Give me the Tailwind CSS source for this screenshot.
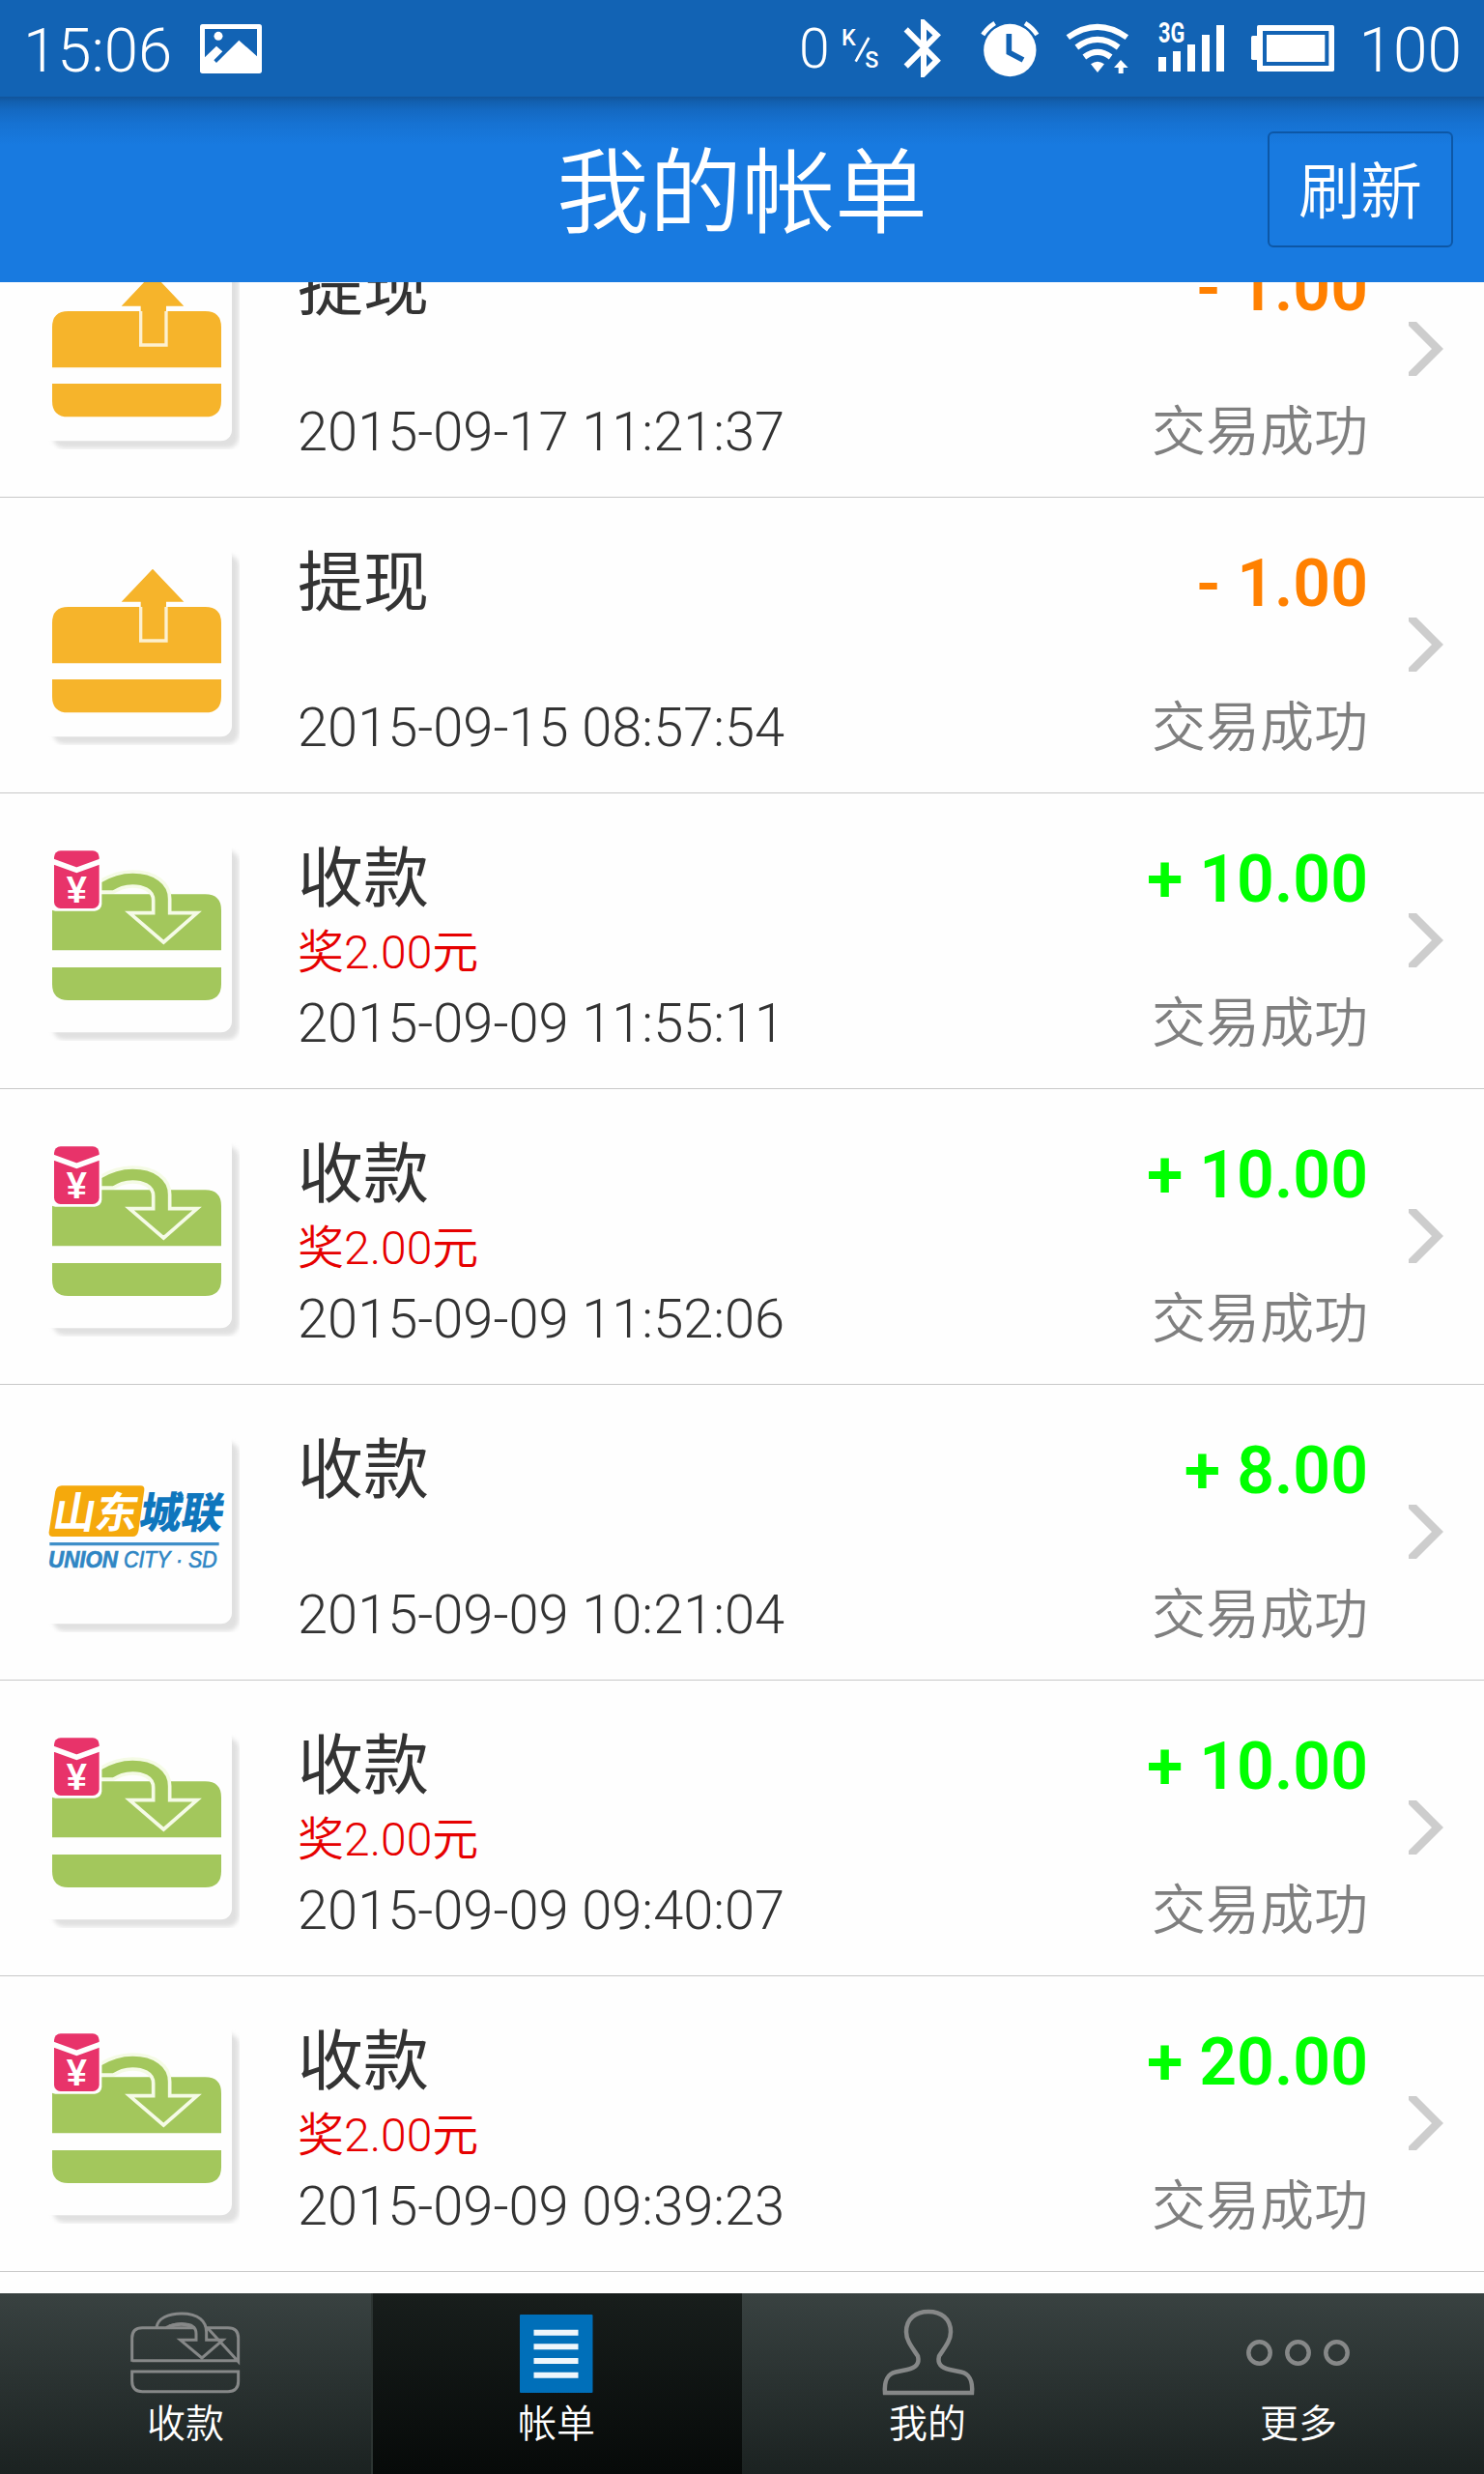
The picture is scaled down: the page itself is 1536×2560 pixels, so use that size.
<!DOCTYPE html>
<html lang="zh-CN">
<head>
<meta charset="utf-8">
<title>我的帐单</title>
<script src="https://cdn.jsdelivr.net/npm/@tailwindcss/browser@4"></script>
</head>
<body class="w-[1536px] h-[2560px] overflow-hidden bg-[#fefefe] font-['Roboto','Noto_Sans_CJK_SC',sans-serif] flex flex-col">

<svg class="hidden">
  <symbol id="card" viewBox="144 165 600 606">
    <rect x="164" y="180" width="578" height="587" rx="36" fill="#e0e0e0" filter="url(#soft)"/>
    <rect x="130" y="150" width="590" height="595" rx="34" fill="#fefefe"/>
  </symbol>
  <symbol id="withdraw" viewBox="144 165 600 606">
    <path d="M162 517V392Q162 342 212 342H637Q687 342 687 392V517ZM162 567H687V620Q687 670 637 670H212Q162 670 162 620Z" fill="#f6b42b"/>
    <path d="M474 224 571 326H516V447H437V326H377Z" fill="#f6b42b"/>
    <path d="M437 342V447H516V342" fill="none" stroke="#fdf0cf" stroke-width="10"/>
  </symbol>
  <symbol id="collect" viewBox="144 165 600 606">
    <path d="M162 490V316H637Q687 316 687 366V490ZM162 543H687V595Q687 645 637 645H212Q162 645 162 595Z" fill="#a3c75c"/>
    <path d="M310 276C345 255 375 246 412 246C480 246 527 280 527 330V374H612L508 465L402 374H476V335C476 302 440 291 412 291C385 291 370 299 352 309H310Z" fill="#a3c75c" stroke="#f5fbe6" stroke-width="11"/>
    <rect x="150" y="173" width="166" height="195" rx="22" fill="#fefefe"/>
    <rect x="168" y="181" width="140" height="179" rx="20" fill="#e8336a"/>
    <path d="M164 214L238 241L312 214" fill="none" stroke="#fefefe" stroke-width="17"/>
    <text x="238" y="342" text-anchor="middle" font-family="Liberation Sans" font-weight="700" font-size="114" fill="#fff">¥</text>
  </symbol>
  <symbol id="union" viewBox="144 165 600 606">
    <path d="M192 316H436Q450 316 448 330L430 456Q426 474 412 474H164Q150 474 152 460L172 334Q176 316 192 316Z" fill="#f5a90c"/>
    <g transform="translate(150 0) skewX(-10)" font-family="Noto Sans CJK SC" font-weight="900" font-size="132">
      <text x="88" y="447" font-weight="700" fill="#fff" textLength="262" lengthAdjust="spacingAndGlyphs">山东</text>
      <text x="357" y="447" fill="#0f76bd" textLength="260" lengthAdjust="spacingAndGlyphs">城联</text>
    </g>
    <path d="M154 497H680" stroke="#3f8fc8" stroke-width="10"/>
    <g font-family="Liberation Sans" font-style="italic" font-size="72" fill="#2f86c4" stroke="#2f86c4" stroke-width="2">
      <text x="150" y="569" font-weight="700" textLength="216" lengthAdjust="spacingAndGlyphs">UNION</text>
      <text x="384" y="569" textLength="290" lengthAdjust="spacingAndGlyphs">CITY · SD</text>
    </g>
  </symbol>
  <symbol id="chevron" viewBox="0 0 36 56">
    <path d="M1 -1L30 28L1 57" fill="none" stroke="#cdcdcd" stroke-width="8.500"/>
  </symbol>
  <filter id="soft"><feGaussianBlur stdDeviation="6"/></filter>
</svg>

<!-- status bar -->
<div class="h-[100px] shrink-0 bg-[#1263b4] text-white font-light text-[64px] leading-[105px] flex items-start pl-6 pr-[23px]">
  <span class="w-[183px] text-[63.5px]">15:06</span>
  <svg class="mt-[25px] w-16 h-[51px]" viewBox="621 75 192 153">
    <rect x="621" y="75" width="192" height="153" rx="8" fill="#fff"/>
    <path d="M636 90H798V175L742 125L672 195L664 187L691 160L672 143L636 178Z" fill="#1263b4"/>
    <circle cx="678" cy="112" r="13.5" fill="#fff"/>
  </svg>
  <div class="ml-auto flex items-start">
    <span class="text-[57px] leading-[101px] mr-2.5">0</span>
    <svg class="mt-[10px] w-[46px] h-20 mr-5" viewBox="168 0 138 240" fill="#fff" font-family="Roboto" font-weight="500" font-size="70">
      <text x="174" y="110">K</text><text x="247" y="179">S</text>
      <path d="M218 161L259 87" stroke="#fff" stroke-width="8"/>
    </svg>
    <svg class="mt-5 w-10 h-[60px] mr-10" viewBox="371 30 120 180"><path d="M379 61L475 158L434 199V41L475 79L379 176" fill="none" stroke="#fff" stroke-width="18"/></svg>
    <svg class="mt-5 w-[61px] h-[60px] mr-[27px]" viewBox="614 30 183 180" fill="none">
      <circle cx="705" cy="126" r="81.5" fill="#fff"/>
      <path d="M621 78Q634 57 658 42M789 78Q776 57 752 42" stroke="#fff" stroke-width="14"/>
      <path d="M702 75V133L746 156" stroke="#1263b4" stroke-width="17"/>
    </svg>
    <svg class="mt-5 w-[66px] h-[60px] mr-[30px]" viewBox="877 30 198 180" fill="none" stroke="#fff" stroke-width="18">
      <path d="M884 86Q976 21 1067 86M911 117Q976 68 1041 117M935 147Q976 116 1017 147"/>
      <path d="M955 169Q976 153 997 169L976 195ZM1048 156L1071 180H1056V198H1041V180H1027Z" fill="#fff" stroke="none"/>
    </svg>
    <svg class="mt-5 w-[68px] h-[56px] mr-7" viewBox="57 30 204 168" fill="#fff">
      <path d="M57 147h24v45h-24zM102 129h24v63h-24zM147 108h24v84h-24zM192 78h24v114h-24zM237 48h24v144h-24z"/>
      <text x="57" y="101" font-family="Roboto" font-weight="700" font-size="88" textLength="82" lengthAdjust="spacingAndGlyphs">3G</text>
    </svg>
    <svg class="mt-[26px] w-[86px] h-12 mr-[26px]" viewBox="345 48 258 144" fill="#fff">
      <rect x="363" y="48" width="240" height="144" rx="5"/><rect x="345" y="81" width="30" height="75" rx="5"/>
      <rect x="381" y="66" width="205" height="108" fill="#1263b4"/><rect x="393" y="78" width="181" height="84"/>
    </svg>
    <span>100</span>
  </div>
</div>

<!-- title bar -->
<header class="relative z-10 h-[192px] shrink-0 bg-[#187ae0] bg-[linear-gradient(to_bottom,#11549a_0px,#125fae_5px,#1469c2_14px,#1672d2_28px,#187ae0_50px)] text-white font-[350] flex">
  <h1 class="w-full pt-2 text-center text-[96px] leading-[184px] font-[350]">我的帐单</h1>
  <button class="absolute right-8 top-9 w-[192px] h-[120px] pt-[9px] rounded-[6px] border-2 border-[#0d57a6] text-[64px] leading-[106px] flex justify-center">刷新</button>
</header>

<!-- bill list -->
<main class="h-[2081px] shrink-0 overflow-hidden text-[#333]">
  <ul class="-mt-[83px]">
    <li class="h-[306px] border-b border-[#c8c8c8] flex">
      <div class="grid w-[200px] h-[202px] ml-12 mt-[54px] *:col-start-1 *:row-start-1"><svg class="size-full"><use href="#card"/></svg><svg class="size-full"><use href="#withdraw"/></svg></div>
      <div class="ml-[60px] pt-[49px] flex-1"><div class="text-[68px] leading-[80px]">提现</div><div class="h-[77px]"></div><div class="text-[56px] leading-[64px] font-light">2015-09-17 11:21:37</div></div>
      <div class="pt-[49px] text-right"><div class="text-[68px] leading-[80px] font-semibold text-[#ff8000]">- 1.00</div><div class="mt-[77px] text-[56px] leading-[64px] font-[350] text-[#7f7f7f]">交易成功</div></div>
      <svg class="w-9 h-14 ml-[42px] mr-[42px] mt-[124px]"><use href="#chevron"/></svg>
    </li>
    <li class="h-[306px] border-b border-[#c8c8c8] flex">
      <div class="grid w-[200px] h-[202px] ml-12 mt-[54px] *:col-start-1 *:row-start-1"><svg class="size-full"><use href="#card"/></svg><svg class="size-full"><use href="#withdraw"/></svg></div>
      <div class="ml-[60px] pt-[49px] flex-1"><div class="text-[68px] leading-[80px]">提现</div><div class="h-[77px]"></div><div class="text-[56px] leading-[64px] font-light">2015-09-15 08:57:54</div></div>
      <div class="pt-[49px] text-right"><div class="text-[68px] leading-[80px] font-semibold text-[#ff8000]">- 1.00</div><div class="mt-[77px] text-[56px] leading-[64px] font-[350] text-[#7f7f7f]">交易成功</div></div>
      <svg class="w-9 h-14 ml-[42px] mr-[42px] mt-[124px]"><use href="#chevron"/></svg>
    </li>
    <li class="h-[306px] border-b border-[#c8c8c8] flex">
      <div class="grid w-[200px] h-[202px] ml-12 mt-[54px] *:col-start-1 *:row-start-1"><svg class="size-full"><use href="#card"/></svg><svg class="size-full"><use href="#collect"/></svg></div>
      <div class="ml-[60px] pt-[49px] flex-1"><div class="text-[68px] leading-[80px]">收款</div><div class="h-[77px] pt-2 text-[48px] leading-[56px] font-[350] text-[#e60000]">奖2.00元</div><div class="text-[56px] leading-[64px] font-light">2015-09-09 11:55:11</div></div>
      <div class="pt-[49px] text-right"><div class="text-[68px] leading-[80px] font-semibold text-[#00ff00]">+ 10.00</div><div class="mt-[77px] text-[56px] leading-[64px] font-[350] text-[#7f7f7f]">交易成功</div></div>
      <svg class="w-9 h-14 ml-[42px] mr-[42px] mt-[124px]"><use href="#chevron"/></svg>
    </li>
    <li class="h-[306px] border-b border-[#c8c8c8] flex">
      <div class="grid w-[200px] h-[202px] ml-12 mt-[54px] *:col-start-1 *:row-start-1"><svg class="size-full"><use href="#card"/></svg><svg class="size-full"><use href="#collect"/></svg></div>
      <div class="ml-[60px] pt-[49px] flex-1"><div class="text-[68px] leading-[80px]">收款</div><div class="h-[77px] pt-2 text-[48px] leading-[56px] font-[350] text-[#e60000]">奖2.00元</div><div class="text-[56px] leading-[64px] font-light">2015-09-09 11:52:06</div></div>
      <div class="pt-[49px] text-right"><div class="text-[68px] leading-[80px] font-semibold text-[#00ff00]">+ 10.00</div><div class="mt-[77px] text-[56px] leading-[64px] font-[350] text-[#7f7f7f]">交易成功</div></div>
      <svg class="w-9 h-14 ml-[42px] mr-[42px] mt-[124px]"><use href="#chevron"/></svg>
    </li>
    <li class="h-[306px] border-b border-[#c8c8c8] flex">
      <div class="grid w-[200px] h-[202px] ml-12 mt-[54px] *:col-start-1 *:row-start-1"><svg class="size-full"><use href="#card"/></svg><svg class="size-full"><use href="#union"/></svg></div>
      <div class="ml-[60px] pt-[49px] flex-1"><div class="text-[68px] leading-[80px]">收款</div><div class="h-[77px]"></div><div class="text-[56px] leading-[64px] font-light">2015-09-09 10:21:04</div></div>
      <div class="pt-[49px] text-right"><div class="text-[68px] leading-[80px] font-semibold text-[#00ff00]">+ 8.00</div><div class="mt-[77px] text-[56px] leading-[64px] font-[350] text-[#7f7f7f]">交易成功</div></div>
      <svg class="w-9 h-14 ml-[42px] mr-[42px] mt-[124px]"><use href="#chevron"/></svg>
    </li>
    <li class="h-[306px] border-b border-[#c8c8c8] flex">
      <div class="grid w-[200px] h-[202px] ml-12 mt-[54px] *:col-start-1 *:row-start-1"><svg class="size-full"><use href="#card"/></svg><svg class="size-full"><use href="#collect"/></svg></div>
      <div class="ml-[60px] pt-[49px] flex-1"><div class="text-[68px] leading-[80px]">收款</div><div class="h-[77px] pt-2 text-[48px] leading-[56px] font-[350] text-[#e60000]">奖2.00元</div><div class="text-[56px] leading-[64px] font-light">2015-09-09 09:40:07</div></div>
      <div class="pt-[49px] text-right"><div class="text-[68px] leading-[80px] font-semibold text-[#00ff00]">+ 10.00</div><div class="mt-[77px] text-[56px] leading-[64px] font-[350] text-[#7f7f7f]">交易成功</div></div>
      <svg class="w-9 h-14 ml-[42px] mr-[42px] mt-[124px]"><use href="#chevron"/></svg>
    </li>
    <li class="h-[306px] border-b border-[#c8c8c8] flex">
      <div class="grid w-[200px] h-[202px] ml-12 mt-[54px] *:col-start-1 *:row-start-1"><svg class="size-full"><use href="#card"/></svg><svg class="size-full"><use href="#collect"/></svg></div>
      <div class="ml-[60px] pt-[49px] flex-1"><div class="text-[68px] leading-[80px]">收款</div><div class="h-[77px] pt-2 text-[48px] leading-[56px] font-[350] text-[#e60000]">奖2.00元</div><div class="text-[56px] leading-[64px] font-light">2015-09-09 09:39:23</div></div>
      <div class="pt-[49px] text-right"><div class="text-[68px] leading-[80px] font-semibold text-[#00ff00]">+ 20.00</div><div class="mt-[77px] text-[56px] leading-[64px] font-[350] text-[#7f7f7f]">交易成功</div></div>
      <svg class="w-9 h-14 ml-[42px] mr-[42px] mt-[124px]"><use href="#chevron"/></svg>
    </li>
  </ul>
</main>

<!-- tab bar -->
<nav class="h-[187px] shrink-0 grid grid-cols-4 bg-linear-to-b from-[#394241] to-[#1b2221] text-white font-[350] text-[40px] leading-[42px] text-center">
  <div class="pt-[7px] flex flex-col items-center gap-2">
    <svg class="w-[120px] h-[100px]" viewBox="36 0 360 300" fill="none" stroke="#868888" stroke-width="9">
      <path d="M50 191V118Q50 86 82 86H246M284 86H348Q380 86 380 118V191ZM50 191V188H380M50 222H380V252Q380 284 348 284H82Q50 284 50 252Z"/>
      <path d="M126 84C130 58 160 42 204 42C256 42 281 66 281 100V124H332L267 180L200 124H249V104C249 80 228 74 206 74C184 74 170 78 156 86"/>
      <path d="M166 82Q205 68 234 82" stroke-width="11"/>
    </svg>
    <span>收款</span>
  </div>
  <div class="pt-[7px] flex flex-col items-center gap-2 bg-linear-to-b from-[#181e1c] to-[#070a09] border-l-2 border-[#2c3432]">
    <svg class="w-[120px] h-[100px] -ml-0.5" viewBox="0 0 120 100"><rect x="22" y="15" width="75.500" height="81" rx="1" fill="#006fb9"/><path d="M36.500 33.700h46M36.500 48.300h46M36.500 63h46M36.500 77.700h46" stroke="#eef6fb" stroke-width="6"/></svg>
    <span class="-ml-0.5">帐单</span>
  </div>
  <div class="pt-[7px] flex flex-col items-center gap-2">
    <svg class="w-[120px] h-[100px]" viewBox="0 0 120 100" fill="none" stroke="#868888" stroke-width="4.500"><path d="M16 96H106C107 84 103 76 95 74.500L83 72C74 70 70 66 72 58C78 49 84 42 84 33C84 19 74 12 61 12C48 12 38 19 38 33C38 42 44 49 50 58C52 66 48 70 39 72L27 74.500C19 76 15 84 16 96Z"/></svg>
    <span>我的</span>
  </div>
  <div class="pt-[7px] flex flex-col items-center gap-2">
    <svg class="w-[120px] h-[100px]" viewBox="0 0 120 100" fill="none" stroke="#868888" stroke-width="4.500"><circle cx="19.500" cy="54.500" r="11.200"/><circle cx="59.500" cy="54.500" r="11.200"/><circle cx="99.500" cy="54.500" r="11.200"/></svg>
    <span>更多</span>
  </div>
</nav>
</body>
</html>
